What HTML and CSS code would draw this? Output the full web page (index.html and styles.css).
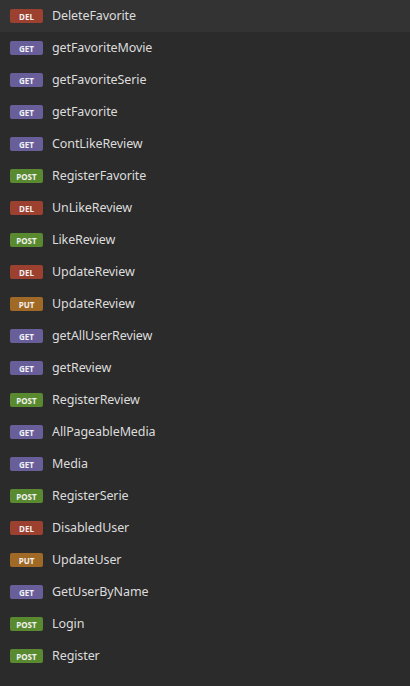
FILE: index.html
```html
<!DOCTYPE html>
<html>
<head>
<meta charset="utf-8">
<link rel="stylesheet" href="styles.css">
</head>
<body>
<ul class="list">
  <li class="row active"><span class="badge del">DEL</span><span class="name">DeleteFavorite</span></li>
  <li class="row"><span class="badge get">GET</span><span class="name">getFavoriteMovie</span></li>
  <li class="row"><span class="badge get">GET</span><span class="name">getFavoriteSerie</span></li>
  <li class="row"><span class="badge get">GET</span><span class="name">getFavorite</span></li>
  <li class="row"><span class="badge get">GET</span><span class="name">ContLikeReview</span></li>
  <li class="row"><span class="badge post">POST</span><span class="name">RegisterFavorite</span></li>
  <li class="row"><span class="badge del">DEL</span><span class="name">UnLikeReview</span></li>
  <li class="row"><span class="badge post">POST</span><span class="name">LikeReview</span></li>
  <li class="row"><span class="badge del">DEL</span><span class="name">UpdateReview</span></li>
  <li class="row"><span class="badge put">PUT</span><span class="name">UpdateReview</span></li>
  <li class="row"><span class="badge get">GET</span><span class="name">getAllUserReview</span></li>
  <li class="row"><span class="badge get">GET</span><span class="name">getReview</span></li>
  <li class="row"><span class="badge post">POST</span><span class="name">RegisterReview</span></li>
  <li class="row"><span class="badge get">GET</span><span class="name">AllPageableMedia</span></li>
  <li class="row"><span class="badge get">GET</span><span class="name">Media</span></li>
  <li class="row"><span class="badge post">POST</span><span class="name">RegisterSerie</span></li>
  <li class="row"><span class="badge del">DEL</span><span class="name">DisabledUser</span></li>
  <li class="row"><span class="badge put">PUT</span><span class="name">UpdateUser</span></li>
  <li class="row"><span class="badge get">GET</span><span class="name">GetUserByName</span></li>
  <li class="row"><span class="badge post">POST</span><span class="name">Login</span></li>
  <li class="row"><span class="badge post">POST</span><span class="name">Register</span></li>
</ul>
</body>
</html>
```
FILE: styles.css
```css
html, body {
  margin: 0;
  padding: 0;
  background: #2b2b2b;
  height: 100%;
}
body {
  font-family: "Noto Sans", "Open Sans", sans-serif;
  color: #dcdcdc;
}
.list {
  list-style: none;
  margin: 0;
  padding: 0;
}
.row {
  display: flex;
  align-items: center;
  height: 32px;
  padding-left: 10px;
  gap: 9px;
}
.row.active {
  background: #333333;
}
.badge {
  width: 33px;
  height: 14px;
  border-radius: 2px;
  display: flex;
  align-items: center;
  justify-content: center;
  font-size: 8px;
  font-weight: 700;
  color: #f2f2f2;
  font-family: "Noto Sans", sans-serif;
  letter-spacing: 0;
}
.del { background: #9c4030; }
.get { background: #685e9a; }
.post { background: #598a2f; }
.put { background: #a06a26; }
.name {
  font-family: "Noto Sans", sans-serif;
  font-size: 12.5px;
  letter-spacing: -0.1px;
  line-height: 1;
}
```
